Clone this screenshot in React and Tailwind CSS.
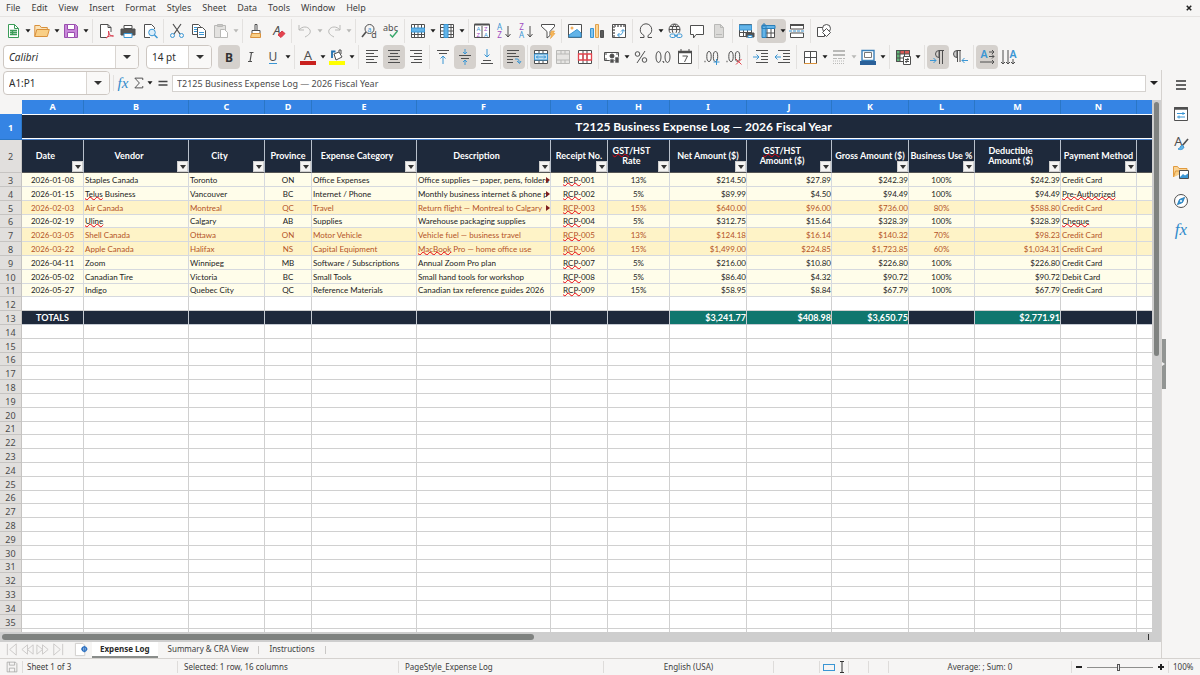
import React from "react";
import clsx from "clsx";

const INK = "#4f4f4f";
const BLUE = "#3a96d4";
const GREY = "#b9b9b7";

function Icon({ children, className = "size-4", stroke = INK }) {
  return (
    <svg viewBox="0 0 16 16" className={clsx("shrink-0 overflow-visible", className)} fill="none" stroke={stroke} strokeWidth="1">
      {children}
    </svg>
  );
}

function Glyph({ x, y, size = 8, fill = INK, weight = 400, anchor = "middle", children, italic }) {
  return (
    <text x={x} y={y} fontSize={size} fill={fill} stroke="none" fontWeight={weight} textAnchor={anchor} fontStyle={italic ? "italic" : "normal"} fontFamily='"Noto Sans", sans-serif'>
      {children}
    </text>
  );
}

const lines = (rows) => <path d={rows.map(([x, y, w]) => `M${x} ${y}h${w}`).join("")} />;

const icons = {
  newDoc: <Icon stroke="#3c9d59"><path d="M3.5 1.5h6l4 4v9h-10z" fill="#fff" /><path d="M9.5 1.5v4h4" /><path d="M5 7.5h7M5 9.5h7M5 11.5h7M7.5 7v5" strokeWidth="1.4" /></Icon>,
  open: <Icon stroke="#d9913c"><path d="M.8 13.5v-11h5l1.5 2h6v2" fill="#fbe3b8" /><path d="M.8 13.5l2-7h12.5l-2 7z" fill="#f9cf86" /></Icon>,
  save: <Icon stroke="#9a4fae"><path d="M1.5 1.5h11l2 2v11h-13z" fill="#c987da" /><path d="M4.5 1.5h7v5h-7z" fill="#fff" /><path d="M4.5 9.5h7v5h-7z" fill="#fff" /></Icon>,
  pdf: <Icon><path d="M13 9V4.500l-3-3H2.500v13H8" fill="#fff" /><path d="M10 1.500v3h3" /><path d="M8 15c3-2 3-4 2.500-7 .5 4 2 5 5 5-3-.5-5 0-7.500 2z" stroke="#d8384a" /></Icon>,
  print: <Icon><path d="M4 2.500h8v3H4z" fill="#fff" /><path d="M1 6h14v6H1z" fill="#565656" /><path d="M4 10.500h8v4H4z" fill="#fff" stroke={BLUE} /></Icon>,
  preview: <Icon><path d="M12.500 6V4.500l-3-3h-7v13H8" fill="#fff" /><circle cx="10" cy="9.500" r="3.300" fill="#dceefa" stroke={BLUE} /><path d="M12.500 12l3 3" stroke={BLUE} strokeWidth="1.500" /></Icon>,
  cut: <Icon><path d="M4 1l7 10M12 1L5 11" strokeWidth="1.200" /><circle cx="3.500" cy="12.500" r="2" stroke={BLUE} /><circle cx="12.500" cy="12.500" r="2" stroke={BLUE} /></Icon>,
  copy: <Icon><path d="M1.500 1.500h6l2 2v8h-8z" fill="#fff" /><path d="M6.500 4.500h5l3 3v7h-8z" fill="#fff" /><path d="M3 4.500h3M3 6.500h3M3 8.500h3M8 9.500h5M8 11.500h5" stroke={BLUE} /></Icon>,
  paste: <Icon stroke={GREY}><path d="M1.500 2.500h11v12h-11z" fill="#e3e2e0" /><path d="M4.500 1.500h5v2h-5z" fill="#c9c8c6" /><path d="M7.500 6.500h4l3 3v5h-7z" fill="#fff" /></Icon>,
  brush: <Icon><path d="M7 1.500h2v6H7z" fill="#fff" /><path d="M4 7.500h8v3H4z" fill="#fff" /><path d="M3.500 10.500h9v4h-10z" fill="#f9cf86" stroke="#d9913c" /></Icon>,
  clear: <Icon><Glyph x={7} y={12} size={13} italic>A</Glyph><path d="M8 12l4-4 3 2.500-4 4z" fill="#e4434d" stroke="#d8384a" /></Icon>,
  undo: <Icon stroke={GREY}><path d="M2 2v5h5M2 7c3-4 9-4 11 0 1 3-1 5-5 7" /></Icon>,
  redo: <Icon stroke={GREY}><path d="M14 2v5H9M14 7c-3-4-9-4-11 0-1 3 1 5 5 7" /></Icon>,
  find: <Icon><circle cx="8.500" cy="6" r="4.500" /><path d="M5 9L1 14" strokeWidth="1.600" /><Glyph x={8.500} y={8.500} size={7} fill={BLUE}>a</Glyph><Glyph x={13} y={15} size={9}>d</Glyph></Icon>,
  spell: <Icon><Glyph x={7.500} y={7.500} size={9}>abc</Glyph><path d="M7 11.500l2.500 2.500 5-6" stroke="#36a76a" strokeWidth="1.400" /></Icon>,
  row: <Icon><path d="M1.500 1.500h13v13h-13zM1.500 11.500h13M4.500 1.500v13M8 1.500v13M11.500 1.500v13" fill="#fff" /><path d="M1.500 5h13v4h-13z" fill="#63b4e8" stroke={BLUE} /></Icon>,
  col: <Icon><path d="M1.500 1.500h13v13h-13zM1.500 4.500h13M1.500 8h13M1.500 11.500h13M12 1.500v13" fill="#fff" /><path d="M5 1.500h4v13H5z" fill="#63b4e8" stroke={BLUE} /></Icon>,
  sort: <Icon><path d="M.5 1.500h15v13H.5zM8 3v12" fill="#fff" /><path d="M.5 1.500h15" strokeWidth="2" /><Glyph x={4.300} y={8} size={6} fill={BLUE}>A</Glyph><Glyph x={4.300} y={14} size={6} fill="#a04cc0">Z</Glyph><Glyph x={11.800} y={8} size={6} fill="#a04cc0">Z</Glyph><Glyph x={11.800} y={14} size={6} fill={BLUE}>A</Glyph></Icon>,
  asc: <Icon><Glyph x={3.500} y={7} size={8} fill={BLUE}>A</Glyph><Glyph x={3.500} y={15} size={8} fill="#a04cc0">Z</Glyph><path d="M12 3v11M9.500 11l2.500 3 2.500-3" /></Icon>,
  desc: <Icon><Glyph x={3.500} y={7} size={8} fill="#a04cc0">Z</Glyph><Glyph x={3.500} y={15} size={8} fill={BLUE}>A</Glyph><path d="M12 3v11M9.500 11l2.500 3 2.500-3" /></Icon>,
  filter: <Icon><path d="M1.500 1.500h13v2l-4.500 5v4l-3 2.500v-6.500l-5.500-5z" fill="#fff" /><path d="M11.500 8h3l-1.500 2.500h2l-4.500 5 1-4h-1.500z" fill="#f9b85a" stroke="#e49a35" strokeWidth=".6" /></Icon>,
  image: <Icon><path d="M1.500 1.500h13v13h-13z" fill="#fff" /><circle cx="5" cy="5" r="1.500" fill="#f2b263" stroke="none" /><path d="M2 12l3-2 5-3.500 4 3.500v4H2z" fill="#63b4e8" stroke={BLUE} /></Icon>,
  chart: <Icon><path d="M1.500 5.500h3v9h-3z" fill="#83c5ee" stroke={BLUE} /><path d="M6.500 1.500h3v13h-3z" fill="#fbd596" stroke="#e0a04a" /><path d="M11.500 7.500h3v7h-3z" fill="#5a5a5a" /></Icon>,
  pivot: <Icon><path d="M1.500 1.500h13v13h-13z" fill="#fff" /><path d="M3 3h11M3 3v11" strokeWidth="2" stroke="#8d8d8d" strokeDasharray="2 1" /><path d="M7 12c4 0 5-2 5-5M10 8.500l2-2 2 2M8.500 10l-2 2 2 2" stroke={BLUE} /></Icon>,
  omega: <Icon><path d="M2 14.500h4v-2C3.500 11 2 9 2.300 6.500a5.700 5.700 0 0 1 11.400 0c.3 2.500-1.200 4.500-3.700 6v2h4" /></Icon>,
  link: <Icon><circle cx="7.500" cy="6.500" r="5.500" /><path d="M2 6.500h11M3 3.500h9M7.500 1c-3 3-3 8 0 11M7.500 1c3 3 3 8 0 11" /><path d="M2 10h13v5H2z" fill="#f6f5f4" stroke="none" /><rect x="3" y="11" width="5.500" height="3.500" rx="1.700" stroke={BLUE} /><rect x="9.500" y="11" width="5.500" height="3.500" rx="1.700" stroke={BLUE} /><path d="M7 12.700h4" stroke={BLUE} /></Icon>,
  comment: <Icon><path d="M1.500 2.500h13v9H7l-2.500 3.500v-3.500h-3z" fill="#fff" /></Icon>,
  header: <Icon stroke={GREY}><path d="M3.500 1.500h6l3 3v10h-9z" fill="#dbdad8" /><path d="M9.500 1.500v3h3M5 11.500h6" /></Icon>,
  printArea: <Icon><path d="M1.500 1.500h12v12h-12zM1.500 9.500h12M5.500 1.500v12M9.500 1.500v12" fill="#fff" /><path d="M1.500 2h12v5h-12z" fill="#63b4e8" stroke={BLUE} /><path d="M8 10h8v4H8z" fill="#555" /><path d="M10 12.500h4v2h-4z" fill="#fff" stroke={BLUE} /></Icon>,
  freeze: <Icon><path d="M2.500 2.500h12v12h-12zM7 6v9M11 6v9M2.500 10h12" fill="#fff" /><path d="M2 2.500h4v12H2zM2 2.500h13v3H2z" fill="#63b4e8" stroke="#2a7fba" /><path d="M4 0v4M2 2h4" stroke="#2a7fba" /></Icon>,
  split: <Icon><path d="M1.500 2v4h13V2M1.500 14.500V10h13v4.500z" fill="#fff" /><path d="M1 2h14" strokeWidth="2" /><path d="M0 8h16" stroke={BLUE} strokeDasharray="3 1" /></Icon>,
  shapes: <Icon><path d="M1.500 4.500h7v9h-7z" fill="#fff" /><circle cx="10.500" cy="5.500" r="4" fill="#fff" /><path d="M10.500 5.500l4 4-4 4-4-4z" fill="#fff" /></Icon>,
  bold: <Icon><Glyph x={8} y={12.500} size={12} weight={700} fill="#333">B</Glyph></Icon>,
  italic: <Icon><path d="M6.500 3.500h4M5 12.500h4M8.500 3.500l-1.500 9" strokeWidth="1.200" /></Icon>,
  underline: <Icon><Glyph x={8} y={12} size={12}>U</Glyph><path d="M4 14.500h8" stroke={BLUE} /></Icon>,
  fontColor: <Icon><Glyph x={8} y={11} size={13}>A</Glyph><path d="M0 14h16" stroke="#c9211e" strokeWidth="4" /></Icon>,
  highlight: <Icon><path d="M5 5l5-2 3 5-6 3z" fill="#fff" /><path d="M3 9V2.500h3.500" stroke="#2070b0" strokeWidth="1.800" /><path d="M10 3V1h2v4" /><path d="M0 14h16" stroke="#ffff00" strokeWidth="4" /></Icon>,
  left: <Icon>{lines([[2, 1.5, 12], [2, 4.5, 8], [2, 7.5, 12], [2, 10.5, 8], [2, 13.5, 11]])}</Icon>,
  center: <Icon>{lines([[2, 1.5, 12], [4, 4.5, 8], [2, 7.5, 12], [4, 10.5, 8], [2, 13.5, 12]])}</Icon>,
  right: <Icon>{lines([[2, 1.5, 12], [6, 4.5, 8], [2, 7.5, 12], [6, 10.5, 8], [3, 13.5, 11]])}</Icon>,
  top: <Icon>{lines([[2, 1.5, 12], [4, 4.5, 8]])}<path d="M8 15V7M5.500 9.500L8 7l2.500 2.500" stroke={BLUE} /></Icon>,
  middle: <Icon>{lines([[2, 6.5, 12], [4, 9.5, 8]])}<path d="M8 0v5M6 3l2 2 2-2M8 16v-5M6 13l2-2 2 2" stroke={BLUE} /></Icon>,
  bottom: <Icon>{lines([[4, 11.5, 8], [2, 14.5, 12]])}<path d="M8 0v8M5.500 5.500L8 8l2.500-2.500" stroke={BLUE} /></Icon>,
  wrap: <Icon>{lines([[1, 1.5, 12], [1, 4.5, 9], [1, 7.5, 12], [1, 10.5, 6], [1, 13.5, 6]])}<path d="M9 10h2c2 0 2 1 2 4M11 12l2.500 2.500L15 12" stroke={BLUE} /></Icon>,
  merge: <Icon><path d="M1.500 1.500h13v13h-13zM1.500 4.500h13M1.500 11.500h13M6 1.500v3M10 1.500v3M6 11.500v3M10 11.500v3" fill="#fff" /><path d="M1.500 5h13v6h-13z" fill="#bfe0f5" stroke={BLUE} /><path d="M3 8h10M5 6.500L3.500 8 5 9.500M11 6.500L12.500 8 11 9.500" stroke={BLUE} /></Icon>,
  mergeCells: <Icon stroke={GREY}><path d="M1.500 1.500h13v13h-13zM1.500 5h13M1.500 11h13M6 1.500v3.500M10 1.500v3.500M6 11v3.500M10 11v3.500" fill="#e6e5e3" /></Icon>,
  unmerge: <Icon><path d="M1.500 1.500h13v13h-13zM6 1.500v13M10 1.500v13" fill="#fff" /><path d="M1.500 5h13v6h-13zM6 5v6M10 5v6" stroke="#e4434d" strokeWidth="1.300" /></Icon>,
  currency: <Icon><path d="M.5 3.500h14v8H.5z" fill="#fff" /><circle cx="8" cy="7" r="2" fill={INK} /><path d="M1 5h2M12 5h2M1 10h2" /><path d="M6 10h4v4H6zM11 8h4v6h-4z" fill={INK} stroke="#eee" strokeWidth=".6" /></Icon>,
  percent: <Icon><circle cx="4.500" cy="5" r="2.300" /><circle cx="11.500" cy="11" r="2.300" /><path d="M12 2L4 14" /></Icon>,
  decimal: <Icon><ellipse cx="3.500" cy="8" rx="2.500" ry="5.500" /><ellipse cx="12.500" cy="8" rx="2.500" ry="5.500" /><path d="M7.500 12.500h1.200v1.500" /></Icon>,
  date: <Icon><path d="M1.500 2.500h13v12h-13z" fill="#fff" /><path d="M1 3h14" strokeWidth="2.500" /><path d="M4 0v2M12 0v2M5.500 7h5L7.500 13" /></Icon>,
  addDec: <Icon><path d="M.5 12.500h1" strokeWidth="1.500" /><ellipse cx="5" cy="7.500" rx="2.200" ry="5" /><ellipse cx="11.500" cy="7.500" rx="2.200" ry="5" /><path d="M12.500 10v6M9.500 13h6" stroke={BLUE} /></Icon>,
  delDec: <Icon><path d="M.5 12.500h1" strokeWidth="1.500" /><ellipse cx="5" cy="7.500" rx="2.200" ry="5" /><ellipse cx="11.500" cy="7.500" rx="2.200" ry="5" /><path d="M10 10l5.500 5.500M15.500 10L10 15.500" stroke="#e4434d" /></Icon>,
  indent: <Icon>{lines([[3, 1.5, 12], [8, 4.5, 7], [8, 7.5, 7], [8, 10.5, 7], [3, 13.5, 12]])}<path d="M0 8h6M3.500 5.500L6 8l-2.500 2.500" stroke={BLUE} /></Icon>,
  outdent: <Icon>{lines([[3, 1.5, 12], [8, 4.5, 7], [8, 7.5, 7], [8, 10.5, 7], [3, 13.5, 12]])}<path d="M0 8h6M2.500 5.500L0 8l2.500 2.500" stroke={BLUE} /></Icon>,
  borders: <Icon><path d="M2.500 14.500v-12h12v12M8.500 2.500v12M2.500 8.500h12" fill="#fff" /><path d="M2 14.500h13" stroke="#d9913c" /></Icon>,
  lineStyle: <Icon stroke={GREY}><path d="M2 2h12M2 6h12" strokeWidth="2" /><path d="M2 9.500h12" strokeDasharray="4 1" /><path d="M2 12h12M2 14.500h12" strokeDasharray="1 1" /></Icon>,
  borderColor: <Icon><path d="M2 1.500h12v10H2z" fill="#fff" stroke="#3a7fb8" strokeWidth="1.400" /><path d="M4.500 3.500h7v5h-7z" stroke="#777" /><path d="M0 14h16" stroke="#2a6099" strokeWidth="4" /></Icon>,
  conditional: <Icon><path d="M1.500 1.500h13v11h-13z" fill="#fff" /><path d="M1.500 2h3.500v10H1.500z" fill="#62b678" stroke="none" /><path d="M5 2h9v3H5z" fill="#d85a57" stroke="none" /><path d="M1.500 1.500h13v11h-13zM1.500 5h13M1.500 9h13M5 1.500v11M9.500 1.500v11" /><path d="M8.500 7.500h7v8h-7z" fill="#fff" /><path d="M10 10.500h4M10 12.500h4M13 9l-2 5" /></Icon>,
  ltr: <Icon><path d="M14 1.500H9a3.500 3.500 0 0 0 0 7V2M9.500 1.500V15M12.500 1.500V15" /><path d="M0 11.500h6M3.500 9L6 11.500 3.500 14" stroke={BLUE} /></Icon>,
  rtl: <Icon><path d="M9 1.500H5a3.500 3.500 0 0 0 0 7V2" fill="#c9c9c9" /><path d="M5.500 1.500V13M8 1.500V13" /><path d="M16 11.500h-6M12.500 9L10 11.500l2.500 2.500" stroke={BLUE} /></Icon>,
  textLtr: <Icon><Glyph x={5} y={9} size={10.500} fill={BLUE} weight={600}>A</Glyph><path d="M10 3h5M10 7.500h5M1 13h14M13 1l2 2-2 2M13 5.500l2 2-2 2M13 11l2 2-2 2" /></Icon>,
  textTtb: <Icon><Glyph x={12} y={9} size={10.500} fill={BLUE} weight={600}>A</Glyph><path d="M2 1v14M7 1v14M12 10v5M0 13l2 2 2-2M5 13l2 2 2-2M10 13l2 2 2-2" /></Icon>,
};

function Arrow({ muted, label = "More options" }) {
  return (
    <button aria-label={label} className="flex h-6 w-[7px] shrink-0 items-center justify-center">
      <svg viewBox="0 0 6 4" className="h-1 w-1.5" fill={muted ? "#b9b9b7" : "#1c1c1c"}><path d="M.5.300h5L3 3.500z" /></svg>
    </button>
  );
}

function Sep({ wide }) {
  return (
    <span className={clsx("flex h-6 shrink-0 justify-center", wide ? "w-1.5" : "w-[5px]")}>
      <span className="w-px bg-[#e3e1df]" />
    </span>
  );
}

function Tool({ name, on }) {
  return (
    <button aria-label={name} aria-pressed={!!on} className={clsx("flex h-6 w-[22px] shrink-0 items-center justify-center rounded", on && "bg-[#d5d1cd]")}>
      {icons[name]}
    </button>
  );
}

const standard = "newDoc v open v save v || pdf print preview | cut copy paste ~ || brush clear | undo ~ redo ~ || find spell | row v col v || sort asc desc filter | image chart pivot | omega v link comment header | printArea".split(" ");
const formatting = "*bold italic underline v || fontColor v highlight v || left *center right | top *middle bottom | *wrap | *merge mergeCells unmerge | currency v percent decimal date | addDec delDec | indent outdent | borders v lineStyle ~ borderColor v || conditional v || *ltr rtl | *textLtr textTtb".split(" ");

function Tools({ items }) {
  return items.map((t, i) => {
    if (t === "v" || t === "~") return <Arrow key={i} muted={t === "~"} />;
    if (t === "|" || t === "||") return <Sep key={i} wide={t === "||"} />;
    const on = t[0] === "*";
    return <Tool key={i} name={on ? t.slice(1) : t} on={on} />;
  });
}

function Combo({ label, value, className, italic }) {
  return (
    <div className={clsx("flex h-6 shrink-0 overflow-hidden rounded border border-[#cdc7c2] bg-white", className)}>
      <input aria-label={label} defaultValue={value} className={clsx("w-0 min-w-0 grow px-[5px] text-[10px] text-[#2e2e2e] outline-none", italic && "italic")} />
      <button aria-label={`Open ${label}`} className="flex w-[23px] shrink-0 items-center justify-center border-l border-[#d9d5d1] bg-[#f9f8f7]">
        <svg viewBox="0 0 8 4" className="h-1 w-2" fill="#333"><path d="M0 0h8L4 4z" /></svg>
      </button>
    </div>
  );
}

const Bad = ({ children }) => (
  <span className="underline decoration-red-600 decoration-wavy decoration-[1px] underline-offset-[-1px] [text-decoration-skip-ink:none]">{children}</span>
);

const headers = ["Date", "Vendor", "City", "Province", "Expense Category", "Description", "Receipt No.",
  <><Bad>GST</Bad>/HST<br />Rate</>, "Net Amount ($)", <><Bad>GST</Bad>/HST<br />Amount ($)</>, "Gross Amount ($)", "Business Use %",
  <>Deductible<br />Amount ($)</>, "Payment Method", "", ""];
const inset = [true, true, true, false, true, true, false, true, false, true, false, false, true, false, true, true];
const align = ["text-center", "text-left", "text-left", "text-center", "text-left", "text-left", "text-center", "text-center", "text-right", "text-right", "text-right", "text-center", "text-right", "text-left", "text-left", "text-left"];
const letters = "ABCDEFGHIJKLMNOP".split("");

const data = [
  ["2026-01-08", "Staples Canada", "Toronto", "ON", "Office Expenses", "Office supplies — paper, pens, folders", "001", "13%", "$214.50", "$27.89", "$242.39", "100%", "$242.39", "Credit Card"],
  ["2026-01-15", <><Bad>Telus</Bad> Business</>, "Vancouver", "BC", "Internet / Phone", "Monthly business internet & phone p", "002", "5%", "$89.99", "$4.50", "$94.49", "100%", "$94.49", <Bad>Pre-Authorized</Bad>],
  ["2026-02-03", "Air Canada", "Montreal", "QC", "Travel", "Return flight — Montreal to Calgary", "003", "15%", "$640.00", "$96.00", "$736.00", "80%", "$588.80", "Credit Card"],
  ["2026-02-19", <Bad>Uline</Bad>, "Calgary", "AB", "Supplies", "Warehouse packaging supplies", "004", "5%", "$312.75", "$15.64", "$328.39", "100%", "$328.39", <Bad>Cheque</Bad>],
  ["2026-03-05", "Shell Canada", "Ottawa", "ON", "Motor Vehicle", "Vehicle fuel — business travel", "005", "13%", "$124.18", "$16.14", "$140.32", "70%", "$98.23", "Credit Card"],
  ["2026-03-22", "Apple Canada", "Halifax", "NS", "Capital Equipment", <><Bad>MacBook</Bad> Pro — home office use</>, "006", "15%", "$1,499.00", "$224.85", "$1,723.85", "60%", "$1,034.31", "Credit Card"],
  ["2026-04-11", "Zoom", "Winnipeg", "MB", "Software / Subscriptions", "Annual Zoom Pro plan", "007", "5%", "$216.00", "$10.80", "$226.80", "100%", "$226.80", "Credit Card"],
  ["2026-05-02", "Canadian Tire", "Victoria", "BC", "Small Tools", "Small hand tools for workshop", "008", "5%", "$86.40", "$4.32", "$90.72", "100%", "$90.72", "Debit Card"],
  ["2026-05-27", "Indigo", "Quebec City", "QC", "Reference Materials", "Canadian tax reference guides 2026", "009", "15%", "$58.95", "$8.84", "$67.79", "100%", "$67.79", "Credit Card"],
];
const totals = { 0: "TOTALS", 8: "$3,241.77", 9: "$408.98", 10: "$3,650.75", 12: "$2,771.91" };
const rowHeight = (n) => (n % 5 === 1 ? "h-[13px]" : "h-[14px]");

function RowHead({ n, on }) {
  return (
    <th scope="row" className={clsx("border-r border-b p-0 pt-px text-center font-['Noto_Sans',sans-serif] text-[9px] leading-[11px]", on ? "border-[#2a76c6] bg-[#3584e4] font-bold text-white" : "border-[#c6c4c2] bg-[#e1dfdd] font-normal text-[#4a4a4a]")}>
      {n}
    </th>
  );
}

function Sheet() {
  const blank = Array.from({ length: 60 }, (_, i) => i + 14);
  return (
    <table className="w-[1385px] table-fixed border-separate border-spacing-0 font-['Lato',sans-serif]">
      <colgroup>
        <col className="w-[22px]" /><col className="w-[62px]" /><col className="w-[105px]" /><col className="w-[76px]" />
        <col className="w-[47px]" /><col className="w-[105px]" /><col className="w-[134px]" /><col className="w-[57px]" />
        <col className="w-[62px]" /><col className="w-[77px]" /><col className="w-[85px]" /><col className="w-[77px]" />
        <col className="w-[66px]" /><col className="w-[86px]" /><col className="w-[76px]" /><col className="w-[90px]" /><col className="w-[158px]" />
      </colgroup>
      <thead>
        <tr className="h-3.5">
          <th className="bg-[#f6f5f4] p-0" aria-label="Select all" />
          {letters.map((l) => (
            <th key={l} scope="col" className="border-r border-[#2a76c6] bg-[#3584e4] p-0 font-['Noto_Sans',sans-serif] text-[9px] leading-3 font-bold text-white">{l}</th>
          ))}
        </tr>
      </thead>
      <tbody>
        <tr className="h-[26px]">
          <RowHead n={1} on />
          <td colSpan={16} className="border-b border-[#4f86cf] p-0">
            <div className="border-y border-white bg-[#1e293b] text-center text-[12px] leading-[23px] font-bold text-white">T2125 Business Expense Log — 2026 Fiscal Year</div>
          </td>
        </tr>
        <tr className="h-[33px]">
          <RowHead n={2} />
          {headers.map((h, i) => (
            <th key={i} scope="col" className="h-[33px] border-r border-b border-r-[#b8c0cb] border-b-[#555] bg-[#1e293b] p-0 text-[9px] leading-[10px] font-bold whitespace-nowrap text-white">
              <div className={clsx("relative flex h-8 items-center justify-center", inset[i] && "pr-3.5")}>
                <span>{h}</span>
                <button aria-label={`Filter column ${letters[i]}`} className="absolute right-0 bottom-0 flex size-[11px] items-center justify-center border border-[#cfcfcf] bg-[#f4f3f2]">
                  <svg viewBox="0 0 6 4" className="h-1 w-1.5" fill="#333"><path d="M0 0h6L3 4z" /></svg>
                </button>
              </div>
            </th>
          ))}
        </tr>
        {data.map((r, ri) => {
          const flagged = [2, 4, 5].includes(ri);
          return (
            <tr key={ri} className={clsx(rowHeight(ri + 3), flagged ? "bg-[#fef3c7] text-[#b45328]" : "bg-[#fffdea] text-[#222]")}>
              <RowHead n={ri + 3} />
              {align.map((a, i) => (
                <td key={i} className={clsx("border-r border-b border-[#d6d9de] p-0 text-[8px] leading-3 whitespace-nowrap", a)}>
                  {i === 5 ? (
                    <div className="relative overflow-hidden pl-px">
                      {r[i]}
                      {ri < 3 && <svg viewBox="0 0 4 6" className="absolute top-[3px] right-0 h-1.5 w-1" fill="#7f1d1d"><path d="M0 0l4 3-4 3z" /></svg>}
                    </div>
                  ) : i === 6 ? <><Bad>RCP-</Bad>{r[i]}</> : <div className={a === "text-left" ? "pl-px" : undefined}>{r[i]}</div>}
                </td>
              ))}
            </tr>
          );
        })}
        <tr className="h-3.5">
          <RowHead n={12} />
          {letters.map((l) => <td key={l} className="border-r border-b border-[#d0d0d0] p-0" />)}
        </tr>
        <tr className="h-3.5">
          <RowHead n={13} />
          {letters.map((l, i) => (
            <td key={l} className={clsx("border-r border-b border-[#c5cad2] p-0 text-[9px] leading-3 font-bold text-white", i > 0 && totals[i] ? "bg-[#0f766e]" : "bg-[#1e293b]", i ? "text-right" : "text-center")}>{totals[i]}</td>
          ))}
        </tr>
        {blank.map((n) => (
          <tr key={n} className={rowHeight(n)}>
            <RowHead n={n} />
            {letters.map((l) => <td key={l} className="border-r border-b border-[#d0d0d0] p-0" />)}
          </tr>
        ))}
      </tbody>
    </table>
  );
}

const side = [
  ["Sidebar settings", <Icon stroke="#333"><path d="M3 4h10M3 8h10M3 12h10" strokeWidth="1.600" /></Icon>],
  ["Properties", <Icon><path d="M1.500 1.500h13v13h-13z" fill="#fff" /><path d="M1 2.500h14" strokeWidth="2.500" /><path d="M4 7.500h8M4 11h8M10 6v3M6 9.500v3" stroke={BLUE} /></Icon>],
  ["Styles", <Icon><Glyph x={5.500} y={11} size={13}>A</Glyph><path d="M15 4l-6 7" strokeWidth="1.600" /><path d="M9 10l2 2c-1 3-4 3-6 2 2 0 2-3 4-4z" fill="#63b4e8" stroke={BLUE} /></Icon>],
  ["Gallery", <Icon><path d="M.5 13V2.500h4l1.500 2h8V7" fill="#fbd596" stroke="#e09a3e" /><path d="M.5 13l2-6H14" fill="#f9cf86" stroke="#e09a3e" /><path d="M6.500 6.500h9v8h-9z" fill="#fff" /><path d="M7 13l3-3 2 1.500 3-2V14H7z" fill="#3a96d4" stroke="none" /></Icon>],
  ["Navigator", <Icon><circle cx="8" cy="8" r="6.500" fill="#fff" /><path d="M11.500 4.500L9.500 9.500l-5 2 2-5z" fill="#3a96d4" stroke="#2a7fba" /><circle cx="8" cy="8" r="1" fill="#fff" stroke="none" /></Icon>],
];

const Fx = ({ className }) => <span className={clsx("font-['Liberation_Serif',serif] leading-none text-[#2f8acb] italic", className)}>fx</span>;

function StatusSep() {
  return <span className="h-3 w-px shrink-0 bg-[#dedcda]" />;
}

export default function App() {
  return (
    <div className="flex h-screen flex-col overflow-hidden bg-[#f6f5f4] font-['Noto_Sans',sans-serif] text-[#3d3d3d]">
      <nav className="flex h-[17px] shrink-0 items-center gap-[11px] border-b border-[#e6e4e2] px-1.5 text-[9px] leading-4">
        {["File", "Edit", "View", "Insert", "Format", "Styles", "Sheet", "Data", "Tools", "Window", "Help"].map((m) => (
          <button key={m}>{m}</button>
        ))}
        <button aria-label="Close document" className="mr-0.5 ml-auto">
          <svg viewBox="0 0 8 8" className="size-1.5" stroke="#222" strokeWidth="2"><path d="M1 1l6 6M7 1L1 7" /></svg>
        </button>
      </nav>

      <div className="flex h-[27px] shrink-0 items-center pl-0.5">
        <Tools items={standard} />
        <div className="flex rounded bg-[#d5d1cd]"><Tool name="freeze" /><Arrow /></div>
        <Tools items={["split", "|", "shapes"]} />
      </div>
      <div className="flex h-[26px] shrink-0 items-center pl-[3px]">
        <Combo label="Font name" value="Calibri" italic className="mr-[7px] w-[136px]" />
        <Combo label="Font size" value="14 pt" className="mr-1.5 w-[66px]" />
        <Tools items={formatting} />
      </div>

      <div className="flex min-h-0 grow">
        <div className="flex min-w-0 grow flex-col">
          <div className="flex h-[30px] shrink-0 items-center pb-1 pl-[3px]">
            <Combo label="Name box" value="A1:P1" className="w-[107px]" />
            <span className="mr-px ml-[3px] h-4 w-px bg-[#e3e1df]" />
            <button aria-label="Function wizard" className="flex w-4 justify-center"><Fx className="text-[15px]" /></button>
            <button aria-label="Select function" className="ml-px flex w-3.5 justify-center"><Icon className="size-3"><path d="M13 4V1.500H2.500L8.500 8l-6 6.500H13V12" strokeWidth="1.300" /></Icon></button>
            <Arrow />
            <button aria-label="Formula" className="mr-[3px] ml-1 flex w-3 justify-center"><Icon className="size-3" stroke="#444"><path d="M2 6h12M2 10.500h12" strokeWidth="2" /></Icon></button>
            <input aria-label="Formula input" defaultValue="T2125 Business Expense Log — 2026 Fiscal Year" className="h-[17px] min-w-0 grow border border-[#d5d2cf] bg-white px-1 text-[9px] text-[#4a4a4a] outline-none" />
            <button aria-label="Expand formula bar" className="flex w-[15px] justify-center">
              <svg viewBox="0 0 8 4" className="h-1 w-2" fill="#222"><path d="M0 0h8L4 4z" /></svg>
            </button>
          </div>
          <div className="flex min-h-0 grow">
            <div className="min-w-0 grow overflow-hidden bg-white"><Sheet /></div>
            <div className="flex w-[9px] shrink-0 flex-col bg-[#cecece] px-0.5 pt-0.5">
              <div className="h-[48%] rounded-full bg-[#7f8280]" />
            </div>
          </div>
          <div className="flex h-2.5 shrink-0 items-center bg-[#cecece] px-0.5">
            <div className="h-1.5 w-[46%] rounded-full bg-[#7f8280]" />
            <div className="mr-2.5 ml-auto h-1.5 w-px bg-[#333]" />
          </div>
          <div className="flex h-4 shrink-0 items-start text-[8px] leading-[14px]">
            <div className="flex w-[70px] items-center justify-center">
              {["M2.5 2v12M12 2L5 8l7 6z", "M8 3L2 8l6 5zM14 3L8 8l6 5z", "M2 3l6 5-6 5zM8 3l6 5-6 5z", "M13.500 2v12M4 2l7 6-7 6z"].map((d, i) => (
                <button key={i} aria-label={["First sheet", "Previous sheet", "Next sheet", "Last sheet"][i]}><Icon className="size-[15px]" stroke="#cbc9c7"><path d={d} /></Icon></button>
              ))}
            </div>
            <button aria-label="Add sheet" className="ml-1 flex w-[18px]">
              <Icon className="size-[15px]" stroke="#cfcdcb"><path d="M1.500 1.500h8l2 2v11h-10z" fill="#fff" /><circle cx="11" cy="7.500" r="2.300" fill="#fff" stroke="#2a6fc0" strokeWidth="1.400" /><path d="M11 4v7M7.500 7.500h7" stroke="#2a6fc0" /></Icon>
            </button>
            <button className="h-4 border-b-2 border-[#8a8d8b] bg-white px-2 font-bold text-[#2a2a2a]">Expense Log</button>
            <button className="px-2.5">Summary &amp; CRA View</button>
            <span className="mt-1 h-2 w-px bg-[#c9c7c5]" />
            <button className="px-2.5">Instructions</button>
            <span className="mt-1 h-2 w-px bg-[#c9c7c5]" />
          </div>
        </div>

        <aside className="flex w-[39px] shrink-0 border-l border-[#d5d2cf]">
          <button aria-label="Resize sidebar" className="flex h-[50px] w-1 items-center self-center bg-[#929593]">
            <svg viewBox="0 0 4 4" className="size-1" fill="#f0f0f0"><path d="M0 0l3 2-3 2z" /></svg>
          </button>
          <div className="-ml-1 flex grow flex-col items-center">
            {side.map(([label, icon]) => (
              <button key={label} aria-label={label} className="flex h-[29px] items-center">{icon}</button>
            ))}
            <button aria-label="Functions" className="flex h-[29px] items-center"><Fx className="text-[17px]" /></button>
          </div>
        </aside>
      </div>

      <footer className="flex h-[17px] shrink-0 items-center border-t border-[#d5d2cf] text-[8px] leading-4">
        <span className="flex w-[22px] justify-center pl-0.5"><Icon className="size-3" stroke="#a3a3a1"><path d="M1.500 1.500h11l2 2v11h-13zM4.500 1.500v4h7v-4M4.500 14.500v-5h7v5" /></Icon></span>
        <StatusSep />
        <span className="w-[154px] pl-1">Sheet 1 of 3</span>
        <StatusSep />
        <span className="w-[220px] pl-1.5">Selected: 1 row, 16 columns</span>
        <StatusSep />
        <span className="w-[204px] pl-1.5">PageStyle_Expense Log</span>
        <StatusSep />
        <span className="grow text-center">English (USA)</span>
        <StatusSep />
        <span className="w-[45px]" />
        <StatusSep />
        <span className="flex w-7 items-center justify-center gap-1">
          <span className="h-[7px] w-3 border border-[#3a96d4]" />
          <svg viewBox="0 0 6 12" className="h-3 w-1.5" fill="none" stroke="#333"><path d="M1 .500h4M1 11.500h4M3 1v10" /></svg>
        </span>
        <StatusSep />
        <span className="w-[19px]" />
        <StatusSep />
        <span className="w-[19px]" />
        <StatusSep />
        <span className="w-[182px] text-center">Average: ; Sum: 0</span>
        <StatusSep />
        <span className="flex w-24 items-center justify-center gap-1">
          <button aria-label="Zoom out" className="flex"><svg viewBox="0 0 8 8" className="size-2" stroke="#222" strokeWidth="2"><path d="M1 4h6" /></svg></button>
          <input
            type="range"
            aria-label="Zoom"
            defaultValue="48"
            className="h-2 w-[66px] appearance-none bg-transparent [&::-webkit-slider-runnable-track]:h-px [&::-webkit-slider-runnable-track]:bg-[#8f8f8d] [&::-webkit-slider-thumb]:-mt-[3px] [&::-webkit-slider-thumb]:h-[7px] [&::-webkit-slider-thumb]:w-[3px] [&::-webkit-slider-thumb]:appearance-none [&::-webkit-slider-thumb]:border [&::-webkit-slider-thumb]:border-[#555] [&::-webkit-slider-thumb]:bg-[#eee]"
          />
          <button aria-label="Zoom in" className="flex"><svg viewBox="0 0 8 8" className="size-2" stroke="#222" strokeWidth="2"><path d="M1 4h6M4 1v6" /></svg></button>
        </span>
        <StatusSep />
        <span className="w-[31px] pl-1">100%</span>
      </footer>
    </div>
  );
}
